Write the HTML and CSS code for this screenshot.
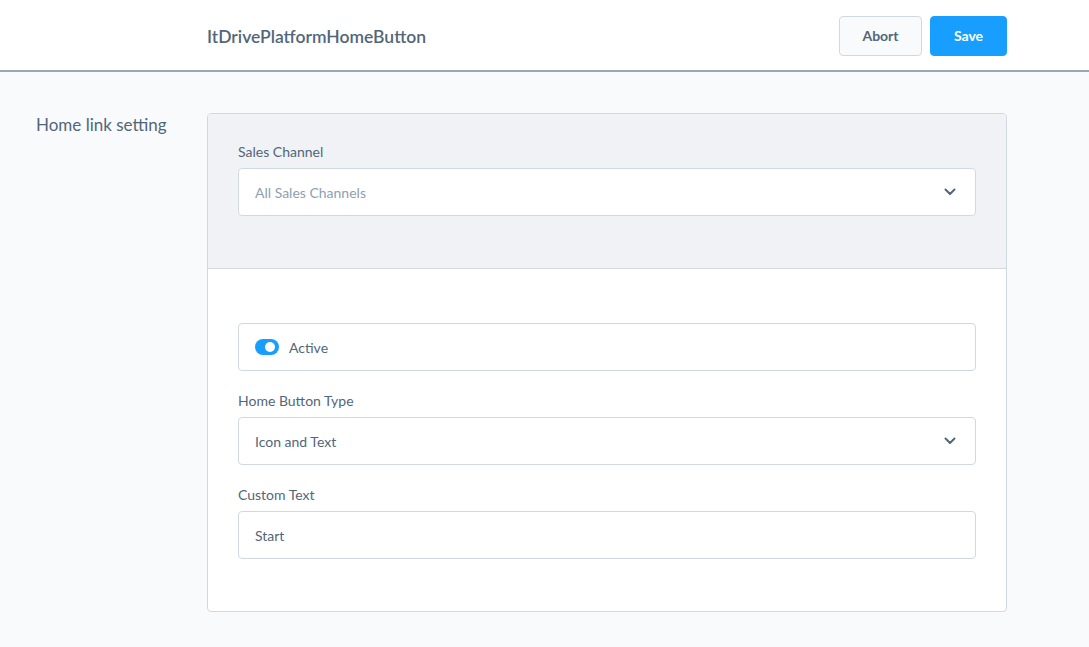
FILE: index.html
```html
<!DOCTYPE html>
<html lang="en">
<head>
<meta charset="utf-8">
<title>ItDrivePlatformHomeButton</title>
<link rel="stylesheet" href="styles.css">
</head>
<body>
<div class="topline"></div>
<header class="smart-bar">
  <h1 class="smart-bar-title">ItDrivePlatformHomeButton</h1>
  <div class="smart-bar-actions">
    <button class="btn btn-default">Abort</button>
    <button class="btn btn-primary">Save</button>
  </div>
</header>
<main class="content">
  <div class="sidebar-title">Home link setting</div>
  <section class="card">
    <div class="card-head">
      <div class="field">
        <label class="field-label">Sales Channel</label>
        <div class="select">
          <span class="placeholder">All Sales Channels</span>
          <svg class="chevron" width="12" height="8" viewBox="0 0 12 8"><path d="M1.5 1.5 L6 6 L10.5 1.5" fill="none" stroke="#52667a" stroke-width="2" stroke-linecap="round" stroke-linejoin="round"/></svg>
        </div>
      </div>
    </div>
    <div class="card-body">
      <div class="field">
        <div class="switch-box">
          <span class="switch"><span class="knob"></span></span>
          <span class="switch-label">Active</span>
        </div>
      </div>
      <div class="field">
        <label class="field-label">Home Button Type</label>
        <div class="select">
          <span class="value">Icon and Text</span>
          <svg class="chevron" width="12" height="8" viewBox="0 0 12 8"><path d="M1.5 1.5 L6 6 L10.5 1.5" fill="none" stroke="#52667a" stroke-width="2" stroke-linecap="round" stroke-linejoin="round"/></svg>
        </div>
      </div>
      <div class="field">
        <label class="field-label">Custom Text</label>
        <div class="input"><span class="value">Start</span></div>
      </div>
    </div>
  </section>
</main>
</body>
</html>
```

FILE: styles.css
```css
* { box-sizing: border-box; }
html, body { margin: 0; padding: 0; }
body {
  background: #f9fafb;
  font-family: "Lato", "Noto Sans", sans-serif;
  color: #52667a;
  width: 1089px;
  height: 647px;
  overflow: hidden;
}
.topline {
  height: 2px;
  background: #fff;
  border-bottom: 1px solid #d9dee3;
}
.smart-bar {
  height: 71px;
  margin-top: -1px;
  background: #fff;
  border-bottom: 2px solid #9aa8b5;
  display: flex;
  align-items: center;
  padding: 0 82px 0 207px;
}
.smart-bar-title {
  margin: 0;
  font-size: 17.5px;
  font-weight: 600;
  color: #52667a;
  flex: 1;
  position: relative;
  top: 1px;
}
.smart-bar-actions {
  display: flex;
  gap: 8px;
}
.btn {
  height: 40px;
  border-radius: 4px;
  font-family: inherit;
  font-size: 14px;
  font-weight: 700;
  padding: 0;
  cursor: pointer;
}
.btn-default {
  width: 83px;
  background: #f9fafb;
  border: 1px solid #d1d9e0;
  color: #52667a;
}
.btn-primary {
  width: 77px;
  background: #189eff;
  border: 1px solid #189eff;
  color: #fff;
}
.content {
  display: flex;
  padding: 41px 0 0 0;
}
.sidebar-title {
  width: 207px;
  padding-left: 36px;
  font-size: 17px;
  line-height: 24px;
  color: #52667a;
}
.card {
  width: 800px;
  border: 1px solid #d1d9e0;
  border-radius: 4px;
  background: #fff;
  overflow: hidden;
}
.card-head {
  background: #f0f2f5;
  border-bottom: 1px solid #d1d9e0;
  padding: 30px 30px 30px;
}
.card-body {
  padding: 54px 30px 30px;
}
.field { margin-bottom: 22px; }
.field-label {
  display: block;
  font-size: 14px;
  line-height: 16px;
  margin-bottom: 8px;
  color: #52667a;
}
.select, .input, .switch-box {
  height: 48px;
  border: 1px solid #d1d9e0;
  border-radius: 4px;
  background: #fff;
  display: flex;
  align-items: center;
  padding: 0 16px;
  font-size: 14px;
}
.select { justify-content: space-between; padding-right: 19px; }
.placeholder { color: #8e9fb3; }
.value { color: #52667a; }
.chevron { display: block; }
.switch-box { gap: 10px; }
.switch {
  width: 24px;
  height: 16px;
  border-radius: 8px;
  background: #189eff;
  position: relative;
}
.knob {
  position: absolute;
  width: 10px;
  height: 10px;
  border-radius: 50%;
  background: #fff;
  top: 3px;
  right: 4px;
}
.switch-label { color: #52667a; }
```
